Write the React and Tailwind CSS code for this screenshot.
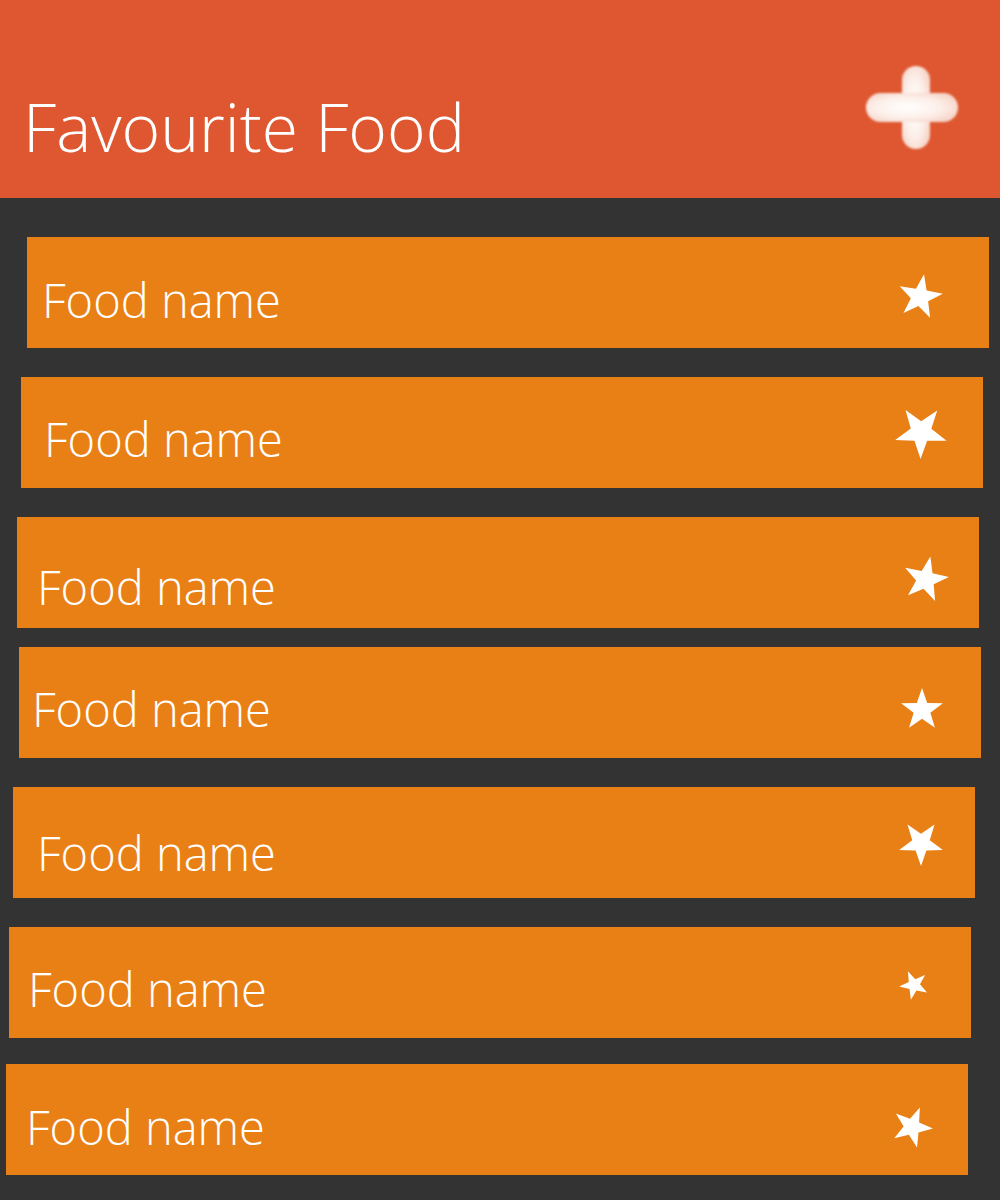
import React from 'react';

const rows = [
  { id: 1, row: 'ml-[27px] mt-[39px]', text: 'pl-[15px] pt-[39px]', star: 'w-[46px] h-[46px] mr-[46px] mt-[37px]', rot: 10 },
  { id: 2, row: 'ml-[21px] mt-[29px]', text: 'pl-[23px] pt-[38px]', star: 'w-[54px] h-[54px] mr-[35px] mt-[28px]', rot: 37 },
  { id: 3, row: 'ml-[17px] mt-[29px]', text: 'pl-[20px] pt-[46px]', star: 'w-[47px] h-[47px] mr-[30px] mt-[39px]', rot: 12 },
  { id: 4, row: 'ml-[19px] mt-[19px]', text: 'pl-[13px] pt-[38px]', star: 'w-[44px] h-[44px] mr-[37px] mt-[41px]', rot: 0 },
  { id: 5, row: 'ml-[13px] mt-[29px]', text: 'pl-[24px] pt-[42px]', star: 'w-[46px] h-[46px] mr-[31px] mt-[33px]', rot: 36 },
  { id: 6, row: 'ml-[9px] mt-[29px]', text: 'pl-[19px] pt-[38px]', star: 'w-[30px] h-[30px] mr-[42px] mt-[43px]', rot: 48 },
  { id: 7, row: 'ml-[6px] mt-[26px]', text: 'pl-[20px] pt-[39px]', star: 'w-[42px] h-[42px] mr-[35px] mt-[42px]', rot: 22 },
];

// five pointed star, outer radius 50, inner 20
const starPoints = Array.from({ length: 10 }, (_, i) => {
  const r = i % 2 === 0 ? 50 : 20;
  const a = (Math.PI / 5) * i - Math.PI / 2;
  return `${(r * Math.cos(a)).toFixed(2)},${(r * Math.sin(a)).toFixed(2)}`;
}).join(' ');

function Star({ className, rot }) {
  return (
    <svg viewBox="-50 -50 100 100" className={'ml-auto shrink-0 ' + className}>
      <polygon points={starPoints} fill="#ffffff" transform={`rotate(${rot})`} />
    </svg>
  );
}

function PlusIcon() {
  return (
    <svg width="100" height="92" viewBox="0 0 100 92" className="mt-[62px] mr-[38px]">
      <defs>
        <filter id="soft" x="-20%" y="-20%" width="140%" height="140%">
          <feGaussianBlur stdDeviation="1.2" />
        </filter>
        <radialGradient id="glow" cx="0.45" cy="0.5" r="0.6">
          <stop offset="0" stopColor="#ffffff" />
          <stop offset="0.6" stopColor="#fcefe9" />
          <stop offset="1" stopColor="#f6d4c8" />
        </radialGradient>
      </defs>
      <g filter="url(#soft)" fill="url(#glow)">
        <rect x="40" y="4" width="28" height="83" rx="14" />
        <rect x="4" y="31" width="92" height="29" rx="14.5" />
      </g>
    </svg>
  );
}

export default function App() {
  return (
    <div className="w-[1000px] h-[1200px] bg-[#333333] overflow-hidden" style={{ fontFamily: '"Open Sans", "Liberation Sans", sans-serif' }}>
      <div className="h-[198px] bg-[#de5730] flex justify-between items-start">
        <h1 className="pl-[23px] pt-[93px] text-[66px] leading-[66px] font-light text-white">Favourite Food</h1>
        <PlusIcon />
      </div>
      <div className="flex flex-col">
        {rows.map((r) => (
          <div key={r.id} className={'w-[962px] h-[111px] bg-[#e98016] flex items-start ' + r.row}>
            <span className={'text-[47px] leading-[48px] font-light text-white ' + r.text}>Food name</span>
            <Star className={r.star} rot={r.rot} />
          </div>
        ))}
      </div>
    </div>
  );
}
